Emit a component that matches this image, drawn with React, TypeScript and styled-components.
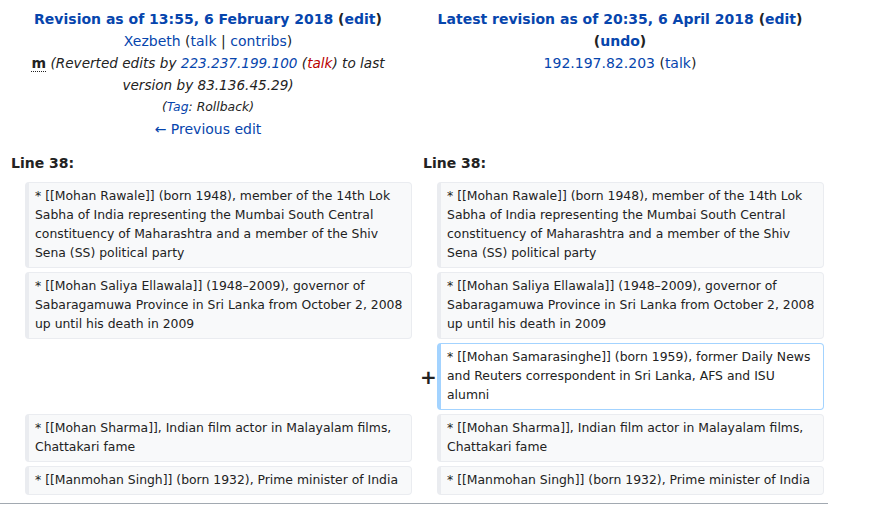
import React from "react";
import styled, { createGlobalStyle } from "styled-components";

const Global = createGlobalStyle`
  html, body { margin: 0; padding: 0; background: #fff; }
  body { font-family: "DejaVu Sans", sans-serif; color: #222; }
`;

const DiffTable = styled.table`
  width: 828px;
  table-layout: fixed;
  border-collapse: separate;
  border-spacing: 4px;
  background: #fff;
`;

const MarkerCol = styled.col`
  width: 17px;
`;
const ContentCol = styled.col`
  width: 387px;
`;

const HeaderCell = styled.td`
  text-align: center;
  vertical-align: top;
  padding: 4px 6px 0;
  font-size: 14px;
  line-height: 22px;
  color: #222;
`;

const HeaderLine = styled.div`
  display: block;
`;

const Link = styled.a<{ $red?: boolean }>`
  color: ${(p) => (p.$red ? "#ba0000" : "#0645ad")};
  text-decoration: none;
  cursor: pointer;
`;

const Bold = styled.strong`
  font-weight: bold;
`;

const Minor = styled.abbr`
  font-weight: bold;
  text-decoration: none;
  border-bottom: 1px dotted #222;
  cursor: help;
`;

const Comment = styled.span`
  font-style: italic;
  font-size: 13.6px;
  color: #222;
`;

const TagLine = styled.div`
  font-size: 12.4px;
  font-style: italic;
  line-height: 22px;
`;

const LinenoCell = styled.td`
  font-weight: bold;
  font-size: 14px;
  line-height: 22px;
  padding: 8px 7px 4px;
  color: #222;
`;

const MarkerCell = styled.td`
  text-align: left;
  vertical-align: middle;
  font-weight: bold;
  font-size: 20px;
  line-height: 22px;
  padding: 0 0 0 4px;
  color: #222;
  overflow: visible;
`;

const ContentCell = styled.td<{ $kind: "context" | "added" }>`
  font-size: 12.4px;
  line-height: 19px;
  vertical-align: top;
  padding: 3px 6px 5px 6px;
  border-style: solid;
  border-width: 1px 1px 1px 4px;
  border-radius: 4px;
  border-color: ${(p) => (p.$kind === "added" ? "#a3d3ff" : "#eaecf0")};
  background: ${(p) => (p.$kind === "added" ? "#fff" : "#f8f9fa")};
  color: #222;
  white-space: pre-wrap;
  word-wrap: break-word;
`;

const EmptyCell = styled.td`
  padding: 0;
`;

const Divider = styled.div`
  width: 828px;
  height: 1px;
  margin-top: 4px;
  background: #a2a9b1;
`;

const rows: { kind: "context" | "added"; text: string }[] = [
  {
    kind: "context",
    text:
      "* [[Mohan Rawale]] (born 1948), member of the 14th Lok Sabha of India representing the Mumbai South Central constituency of Maharashtra and a member of the Shiv Sena (SS) political party",
  },
  {
    kind: "context",
    text:
      "* [[Mohan Saliya Ellawala]] (1948–2009), governor of Sabaragamuwa Province in Sri Lanka from October 2, 2008 up until his death in 2009",
  },
  {
    kind: "added",
    text:
      "* [[Mohan Samarasinghe]] (born 1959), former Daily News and Reuters correspondent in Sri Lanka, AFS and ISU alumni",
  },
  {
    kind: "context",
    text: "* [[Mohan Sharma]], Indian film actor in Malayalam films, Chattakari fame",
  },
  {
    kind: "context",
    text: "* [[Manmohan Singh]] (born 1932), Prime minister of India",
  },
];

export default function App() {
  return (
    <>
      <Global />
      <DiffTable>
        <colgroup>
          <MarkerCol />
          <ContentCol />
          <MarkerCol />
          <ContentCol />
        </colgroup>
        <tbody>
          <tr>
            <HeaderCell colSpan={2}>
              <HeaderLine>
                <Bold>
                  <Link>Revision as of 13:55, 6 February 2018</Link> (<Link>edit</Link>)
                </Bold>
              </HeaderLine>
              <HeaderLine>
                <Link>Xezbeth</Link> (<Link>talk</Link> | <Link>contribs</Link>)
              </HeaderLine>
              <HeaderLine>
                <Minor title="This is a minor edit">m</Minor>{" "}
                <Comment>
                  (Reverted edits by <Link>223.237.199.100</Link> (<Link $red>talk</Link>) to last
                  version by 83.136.45.29)
                </Comment>
              </HeaderLine>
              <TagLine>
                (<Link>Tag</Link>: Rollback)
              </TagLine>
              <HeaderLine>
                <Link>← Previous edit</Link>
              </HeaderLine>
            </HeaderCell>
            <HeaderCell colSpan={2}>
              <HeaderLine>
                <Bold>
                  <Link>Latest revision as of 20:35, 6 April 2018</Link> (<Link>edit</Link>)
                </Bold>
              </HeaderLine>
              <HeaderLine>
                <Bold>
                  (<Link>undo</Link>)
                </Bold>
              </HeaderLine>
              <HeaderLine>
                <Link>192.197.82.203</Link> (<Link>talk</Link>)
              </HeaderLine>
            </HeaderCell>
          </tr>
          <tr>
            <LinenoCell colSpan={2}>Line 38:</LinenoCell>
            <LinenoCell colSpan={2}>Line 38:</LinenoCell>
          </tr>
          {rows.map((r, i) =>
            r.kind === "added" ? (
              <tr key={i}>
                <EmptyCell colSpan={2} />
                <MarkerCell>+</MarkerCell>
                <ContentCell $kind="added">{r.text}</ContentCell>
              </tr>
            ) : (
              <tr key={i}>
                <MarkerCell />
                <ContentCell $kind="context">{r.text}</ContentCell>
                <MarkerCell />
                <ContentCell $kind="context">{r.text}</ContentCell>
              </tr>
            )
          )}
        </tbody>
      </DiffTable>
      <Divider />
    </>
  );
}
